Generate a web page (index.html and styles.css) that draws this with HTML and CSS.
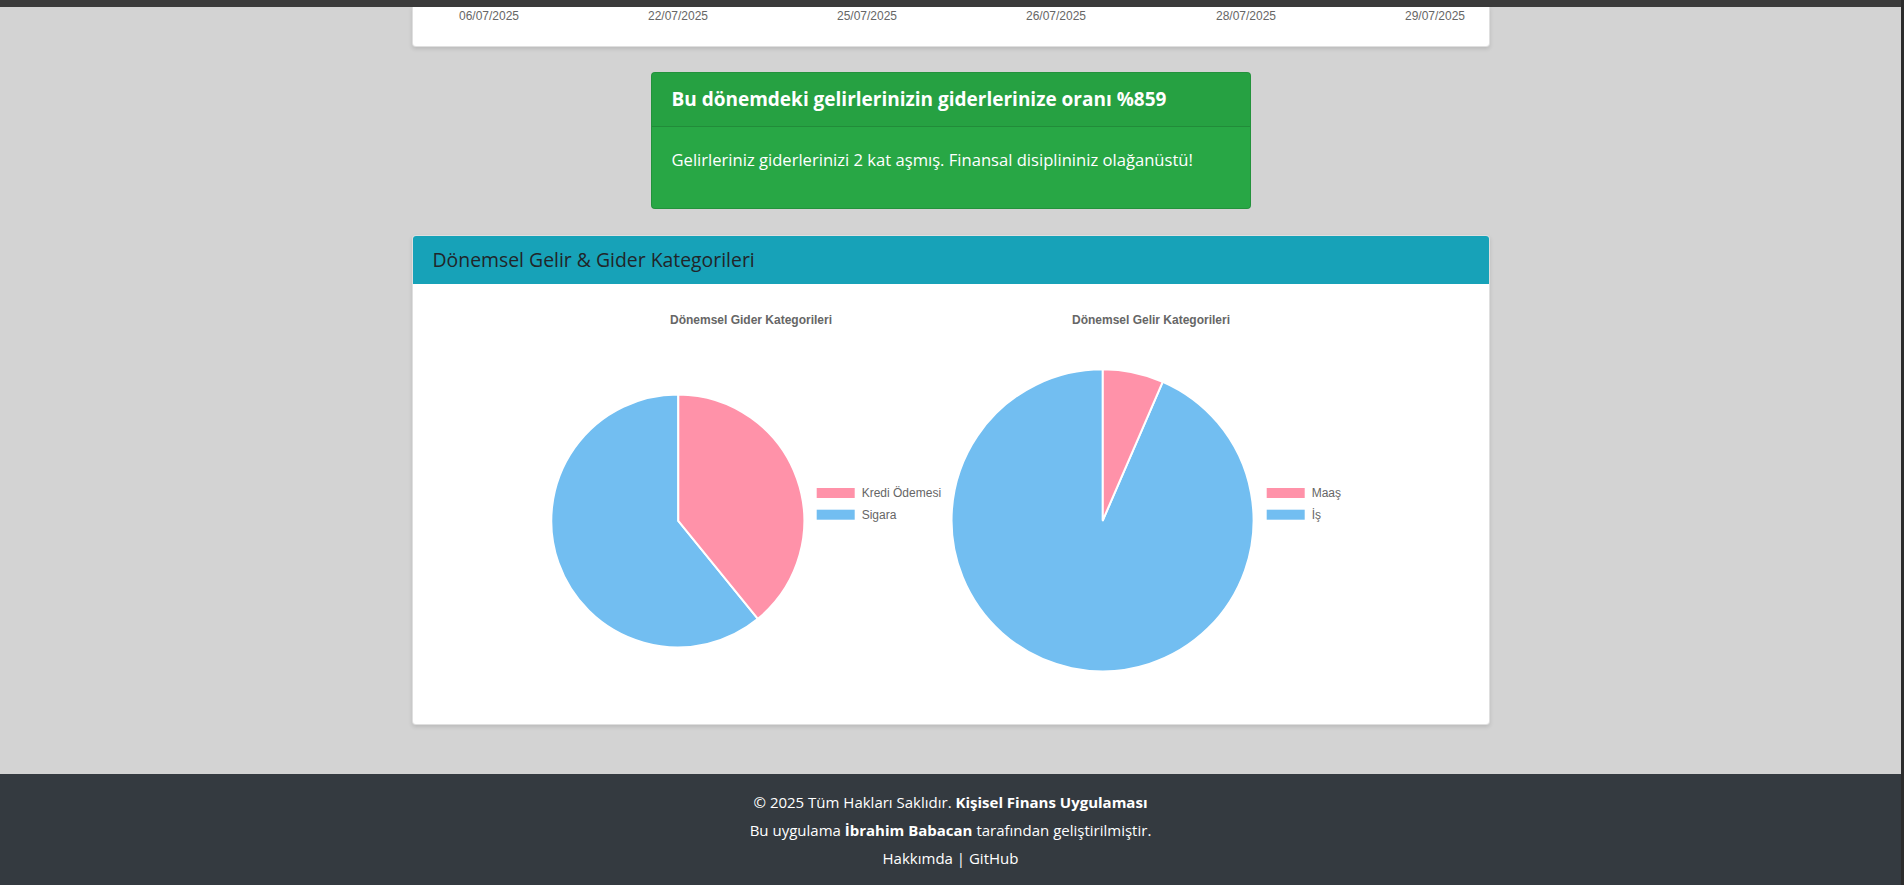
FILE: index.html
```html
<!DOCTYPE html>
<html lang="tr">
<head>
<meta charset="utf-8">
<title>Kişisel Finans Uygulaması</title>
<link rel="stylesheet" href="styles.css">
</head>
<body>
<div class="topbar"></div>
<main class="content">
  <section class="card trend-card">
    <svg class="trend-axis" width="1078" height="40" viewBox="0 0 1078 40">
      <g class="tick-labels">
        <text x="77" y="13">06/07/2025</text>
        <text x="266" y="13">22/07/2025</text>
        <text x="455" y="13">25/07/2025</text>
        <text x="644" y="13">26/07/2025</text>
        <text x="834" y="13">28/07/2025</text>
        <text x="1023" y="13">29/07/2025</text>
      </g>
    </svg>
  </section>

  <section class="card ratio-card">
    <div class="ratio-header">Bu dönemdeki gelirlerinizin giderlerinize oranı %859</div>
    <div class="ratio-body">
      <p>Gelirleriniz giderlerinizi 2 kat aşmış. Finansal disiplininiz olağanüstü!</p>
    </div>
  </section>

  <section class="card cat-card">
    <div class="cat-header">Dönemsel Gelir &amp; Gider Kategorileri</div>
    <div class="cat-body">
      <svg class="pie-chart" width="400" height="400" viewBox="0 0 400 400">
        <text class="chart-title" x="200" y="16">Dönemsel Gider Kategorileri</text>
        <path class="slice-blue" d="M127.3 216.9 L206.9 314.8 A126.5 126.5 0 1 1 127.3 90.4 Z"/>
        <path class="slice-pink" d="M127.3 216.9 L127.3 90.4 A126.5 126.5 0 0 1 206.9 314.8 Z"/>
        <rect class="legend-pink" x="265.7" y="184" width="38" height="10"/>
        <text class="legend-text" x="310.7" y="189">Kredi Ödemesi</text>
        <rect class="legend-blue" x="265.7" y="205.7" width="38" height="10"/>
        <text class="legend-text" x="310.7" y="210.7">Sigara</text>
      </svg>
      <svg class="pie-chart" width="400" height="400" viewBox="0 0 400 400">
        <text class="chart-title" x="200" y="16">Dönemsel Gelir Kategorileri</text>
        <path class="slice-blue" d="M151.8 216.3 L211.7 77.8 A151 151 0 1 1 151.8 65.3 Z"/>
        <path class="slice-pink" d="M151.8 216.3 L151.8 65.3 A151 151 0 0 1 211.7 77.8 Z"/>
        <rect class="legend-pink" x="315.7" y="184" width="38" height="10"/>
        <text class="legend-text" x="360.7" y="189">Maaş</text>
        <rect class="legend-blue" x="315.7" y="205.7" width="38" height="10"/>
        <text class="legend-text" x="360.7" y="210.7">İş</text>
      </svg>
    </div>
  </section>
</main>
<footer class="site-footer">
  <p>© 2025 Tüm Hakları Saklıdır. <strong>Kişisel Finans Uygulaması</strong></p>
  <p>Bu uygulama <strong>İbrahim Babacan</strong> tarafından geliştirilmiştir.</p>
  <p><a href="#">Hakkımda</a> | <a href="#">GitHub</a></p>
</footer>
</body>
</html>
```

FILE: styles.css
```css
* {
  box-sizing: border-box;
}

html, body {
  margin: 0;
  padding: 0;
}

body {
  background: #d3d3d3;
  border-right: 3px solid #2c2c2c;
  font-family: "Open Sans", "Noto Sans", sans-serif;
  font-size: 16px;
  line-height: 24px;
  color: #212529;
}

.topbar {
  height: 7px;
  background: #3b3b3b;
}

.content {
  display: flex;
  flex-direction: column;
  align-items: center;
}

.card {
  background: #fff;
  border: 1px solid rgba(0, 0, 0, 0.125);
  border-radius: 4px;
  box-shadow: 0 2px 4px rgba(0, 0, 0, 0.12);
  overflow: hidden;
}

.trend-card {
  width: 1078px;
  height: 40px;
  border-top: 0;
  border-radius: 0 0 4px 4px;
  margin-bottom: 25px;
}

.trend-axis {
  display: block;
  margin-left: -1px;
}

.tick-labels text {
  font-family: "Liberation Sans", Arial, sans-serif;
  font-size: 12px;
  fill: #666;
  text-anchor: middle;
}

.ratio-card {
  width: 600px;
  background: #28a745;
  color: #fff;
  margin-bottom: 26px;
  box-shadow: none;
}

.ratio-header {
  padding: 12px 20px;
  background: rgba(0, 0, 0, 0.03);
  border-bottom: 1px solid rgba(0, 0, 0, 0.125);
  font-size: 19px;
  font-weight: 700;
  line-height: 29px;
}

.ratio-body {
  padding: 21px 20px 20px;
  font-size: 16.6px;
}

.ratio-body p {
  margin: 0 0 16px;
}

.cat-card {
  width: 1078px;
  margin-bottom: 49px;
}

.cat-header {
  padding: 12px 20px;
  background: #17a2b8;
  font-size: 19.4px;
  line-height: 24px;
  color: #212529;
}

.cat-body {
  padding: 20px;
  display: flex;
  justify-content: center;
}

.pie-chart {
  display: block;
}

.chart-title {
  font-family: "Liberation Sans", Arial, sans-serif;
  font-size: 12px;
  font-weight: 700;
  fill: #666;
  text-anchor: middle;
  dominant-baseline: central;
}

.legend-text {
  font-family: "Liberation Sans", Arial, sans-serif;
  font-size: 12px;
  fill: #666;
  dominant-baseline: central;
}

.slice-pink,
.legend-pink {
  fill: #ff92a9;
}

.slice-blue,
.legend-blue {
  fill: #72bef1;
}

.slice-pink,
.slice-blue {
  stroke: #fff;
  stroke-width: 2;
  stroke-linejoin: round;
}

.site-footer {
  background: #343a40;
  color: #fff;
  text-align: center;
  padding: 16px 0;
  font-size: 15px;
}

.site-footer p {
  margin: 0 0 4px;
}

.site-footer a {
  color: #fff;
  text-decoration: none;
}
```
